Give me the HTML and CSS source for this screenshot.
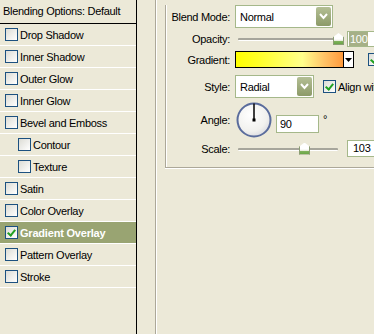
FILE: index.html
```html
<!DOCTYPE html>
<html lang="en">
<head>
    <meta charset="UTF-8">
    <title>Layer Style</title>
    <link rel="stylesheet" href="styles.css">
</head>
<body>
    <div class="dialog">
        <div class="styles-list">
            <div class="list-head">Blending Options: Default</div>
            <div class="item"><span class="check"></span>Drop Shadow</div>
            <div class="item"><span class="check"></span>Inner Shadow</div>
            <div class="item"><span class="check"></span>Outer Glow</div>
            <div class="item"><span class="check"></span>Inner Glow</div>
            <div class="item"><span class="check"></span>Bevel and Emboss</div>
            <div class="item sub"><span class="check"></span>Contour</div>
            <div class="item sub"><span class="check"></span>Texture</div>
            <div class="item"><span class="check"></span>Satin</div>
            <div class="item"><span class="check"></span>Color Overlay</div>
            <div class="item active"><span class="check on"></span>Gradient Overlay</div>
            <div class="item"><span class="check"></span>Pattern Overlay</div>
            <div class="item"><span class="check"></span>Stroke</div>
        </div>

        <div class="options">
            <div class="group">
                <div class="row row-blend">
                    <span class="label">Blend Mode:</span>
                    <div class="select blend">Normal<span class="drop"><svg width="9" height="7" viewBox="0 0 9 7"><polyline points="1,1 4.5,5 8,1" fill="none" stroke="#fff" stroke-width="2"/></svg></span></div>
                </div>
                <div class="row row-opacity">
                    <span class="label">Opacity:</span>
                    <div class="slider opacity">
                        <span class="track"></span>
                        <span class="thumb" style="left: 95px"></span>
                    </div>
                    <div class="field selected"><span class="sel">100</span></div>
                </div>
                <div class="row row-gradient">
                    <span class="label">Gradient:</span>
                    <div class="gradient">
                        <span class="swatch"></span>
                        <span class="arrow"><svg width="7" height="4" viewBox="0 0 7 4"><polygon points="0,0 7,0 3.5,4" fill="#000"/></svg></span>
                    </div>
                    <span class="check on reverse"></span>
                </div>
                <div class="row row-style">
                    <span class="label">Style:</span>
                    <div class="select style">Radial<span class="drop"><svg width="9" height="7" viewBox="0 0 9 7"><polyline points="1,1 4.5,5 8,1" fill="none" stroke="#fff" stroke-width="2"/></svg></span></div>
                    <span class="check on"></span>
                    <span class="align">Align with Layer</span>
                </div>
                <div class="row row-angle">
                    <span class="label">Angle:</span>
                    <div class="dial">
                        <svg width="36" height="36" viewBox="0 0 36 36">
                            <defs>
                                <radialGradient id="dialFill" cx="0.4" cy="0.35" r="0.7">
                                    <stop offset="0" stop-color="#ffffff"/>
                                    <stop offset="0.7" stop-color="#f1f1ee"/>
                                    <stop offset="1" stop-color="#d9dae0"/>
                                </radialGradient>
                            </defs>
                            <circle cx="18" cy="18" r="16.5" fill="url(#dialFill)" stroke="#5a6c9c" stroke-width="2"/>
                            <line x1="18" y1="18" x2="18" y2="1.5" stroke="#000" stroke-width="1.5"/>
                            <rect x="16.5" y="16.5" width="3" height="3" fill="#000"/>
                        </svg>
                    </div>
                    <div class="field angle">90</div>
                    <span class="degree">&deg;</span>
                </div>
                <div class="row row-scale">
                    <span class="label">Scale:</span>
                    <div class="slider scale">
                        <span class="track"></span>
                        <span class="thumb" style="left: 61px"></span>
                    </div>
                    <div class="field scale-field">103</div>
                </div>
            </div>
        </div>
    </div>
</body>
</html>
```

FILE: styles.css
```css
body {
    margin: 0;
    background-color: #ece9d8;
    font-family: "Liberation Sans", Arial, sans-serif;
    font-size: 11px;
    letter-spacing: -0.3px;
    color: #000;
}
.dialog {
    display: flex;
    width: 374px;
    height: 334px;
    overflow: hidden;
}

/* style list on the left */
.styles-list {
    width: 136px;
    flex-shrink: 0;
    border-right: 1px solid #000;
}
.list-head {
    height: 23px;
    line-height: 23px;
    padding-left: 3px;
    border-bottom: 1px solid #000;
    white-space: nowrap;
}
.item {
    display: flex;
    align-items: center;
    height: 21px;
    border-bottom: 1px solid #fff;
    padding-left: 5px;
    white-space: nowrap;
}
.item.sub {
    padding-left: 18px;
}
.item.active {
    background-color: #99a472;
    color: #fff;
    font-weight: bold;
    letter-spacing: -0.2px;
}
.check {
    width: 11px;
    height: 11px;
    border: 1px solid #1c5180;
    background: linear-gradient(135deg, #dcdcd5, #ffffff);
    margin-right: 2px;
    flex-shrink: 0;
    position: relative;
}
.check.on::after {
    content: "";
    position: absolute;
    left: 3px;
    top: 1px;
    width: 3px;
    height: 6px;
    border: solid #21a121;
    border-width: 0 2px 2px 0;
    transform: rotate(40deg);
}

/* options panel */
.options {
    flex: 1;
    margin-left: 18px;
    border-left: 1px solid #aca899;
    box-shadow: inset 1px 0 #fff;
}
.group {
    margin-left: 9px;
    height: 162px;
    border-left: 1px solid #aca899;
    border-bottom: 1px solid #aca899;
    box-shadow: inset 1px 0 #fff, 0 1px #fff;
    width: 300px;
}
.row {
    display: flex;
    align-items: center;
    white-space: nowrap;
}
.label {
    width: 64px;
    text-align: right;
    margin-right: 5px;
    flex-shrink: 0;
}
.row-blend {
    height: 23px;
    margin-top: 5px;
}
.row-opacity {
    height: 16px;
    margin-top: 3px;
}
.row-gradient {
    height: 17px;
    margin-top: 4px;
}
.row-style {
    height: 23px;
    margin-top: 7px;
}
.row-angle {
    height: 37px;
    margin-top: 3px;
}
.row-scale {
    height: 17px;
    margin-top: 2px;
}

.select {
    height: 21px;
    border: 1px solid #a5b88a;
    background-color: #fff;
    display: flex;
    align-items: center;
    justify-content: space-between;
    padding-left: 4px;
    box-sizing: content-box;
}
.select.blend {
    width: 92px;
}
.select.style {
    width: 73px;
}
.drop {
    width: 15px;
    height: 19px;
    margin-right: 1px;
    background: linear-gradient(#b4bf95, #8c9a68);
    border-radius: 2px;
    display: flex;
    align-items: center;
    justify-content: center;
}

.slider {
    position: relative;
    height: 16px;
    margin-left: 3px;
}
.slider.opacity {
    width: 104px;
}
.slider.scale {
    width: 104px;
}
.track {
    position: absolute;
    left: 0;
    right: 4px;
    top: 7px;
    height: 2px;
    background-color: #a7a69c;
    border-bottom: 1px solid #fff;
    border-radius: 1px;
}
.thumb {
    position: absolute;
    top: 2px;
    width: 9px;
    height: 11px;
    background: linear-gradient(#ffffff 55%, #dfe4cf 75%, #7fb15b 76%, #6aa646);
    border: 1px solid #8b9d74;
    border-top: none;
    clip-path: polygon(50% 0, 100% 35%, 100% 100%, 0 100%, 0 35%);
}
.field {
    height: 14px;
    border: 1px solid #a5b88a;
    background-color: #fff;
    padding-left: 3px;
    line-height: 14px;
    width: 40px;
}
.field.selected {
    margin-left: 5px;
    height: 14px;
    padding-left: 1px;
}
.sel {
    background-color: #a6b087;
    color: #fff;
    padding: 1px 1px;
}

.gradient {
    width: 117px;
    height: 15px;
    border: 1px solid #000;
    display: flex;
}
.swatch {
    width: 107px;
    height: 15px;
    background: linear-gradient(90deg, #ffff00 0%, #ffff26 20%, #ffff8c 62%, #ffc468 82%, #ff9a3c 100%);
}
.arrow {
    flex: 1;
    border-left: 1px solid #000;
    background-color: #fff;
    display: flex;
    align-items: center;
    justify-content: center;
}
.check.reverse {
    margin-left: 14px;
}
.row-style .check {
    margin-left: 9px;
}
.align {
    margin-left: 0;
}

.dial {
    width: 36px;
    height: 36px;
    margin-left: 1px;
}
.field.angle {
    margin-left: 4px;
    width: 38px;
    height: 16px;
    line-height: 16px;
    margin-top: 8px;
}
.degree {
    margin-left: 4px;
    margin-top: -2px;
}
.field.scale-field {
    margin-left: 5px;
    height: 15px;
    line-height: 15px;
    padding-left: 5px;
}
```
